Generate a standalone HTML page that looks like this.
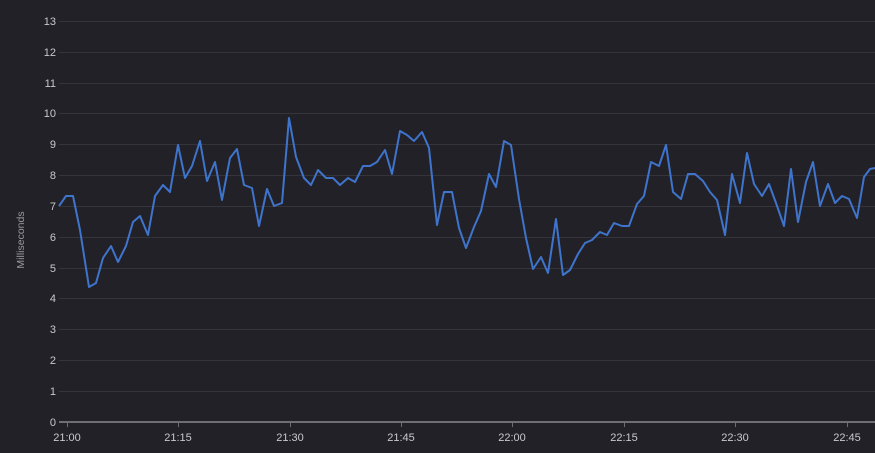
<!DOCTYPE html>
<html><head><meta charset="utf-8"><style>
html,body{margin:0;padding:0;background:#222127;width:875px;height:453px;overflow:hidden}
svg{display:block}
text{font-family:"Liberation Sans",sans-serif;fill:#c9c9cc;font-size:11px}
</style></head><body>
<svg width="875" height="453" viewBox="0 0 875 453">
<rect width="875" height="453" fill="#222127"/>
<g stroke="#34343a" stroke-width="1">
<line x1="59" x2="875" y1="21.5" y2="21.5"/><line x1="59" x2="875" y1="52.5" y2="52.5"/><line x1="59" x2="875" y1="83.5" y2="83.5"/><line x1="59" x2="875" y1="113.5" y2="113.5"/><line x1="59" x2="875" y1="144.5" y2="144.5"/><line x1="59" x2="875" y1="175.5" y2="175.5"/><line x1="59" x2="875" y1="206.5" y2="206.5"/><line x1="59" x2="875" y1="237.5" y2="237.5"/><line x1="59" x2="875" y1="268.5" y2="268.5"/><line x1="59" x2="875" y1="298.5" y2="298.5"/><line x1="59" x2="875" y1="329.5" y2="329.5"/><line x1="59" x2="875" y1="360.5" y2="360.5"/><line x1="59" x2="875" y1="391.5" y2="391.5"/>
</g>
<line x1="59" x2="875" y1="422" y2="422" stroke="#6e6e73" stroke-width="2"/>
<g stroke="#6e6e73" stroke-width="1">
<line x1="67.5" x2="67.5" y1="422" y2="427"/><line x1="178.5" x2="178.5" y1="422" y2="427"/><line x1="290.5" x2="290.5" y1="422" y2="427"/><line x1="401.5" x2="401.5" y1="422" y2="427"/><line x1="512.5" x2="512.5" y1="422" y2="427"/><line x1="624.5" x2="624.5" y1="422" y2="427"/><line x1="735.5" x2="735.5" y1="422" y2="427"/><line x1="847.5" x2="847.5" y1="422" y2="427"/>
</g>
<g text-anchor="end">
<text x="56" y="25">13</text><text x="56" y="56">12</text><text x="56" y="87">11</text><text x="56" y="117">10</text><text x="56" y="148">9</text><text x="56" y="179">8</text><text x="56" y="210">7</text><text x="56" y="241">6</text><text x="56" y="272">5</text><text x="56" y="302">4</text><text x="56" y="333">3</text><text x="56" y="364">2</text><text x="56" y="395">1</text><text x="56" y="426">0</text>
</g>
<g text-anchor="middle">
<text x="67" y="441">21:00</text><text x="178" y="441">21:15</text><text x="290" y="441">21:30</text><text x="401" y="441">21:45</text><text x="512" y="441">22:00</text><text x="624" y="441">22:15</text><text x="735" y="441">22:30</text><text x="847" y="441">22:45</text>
</g>
<text x="0" y="0" transform="translate(24,240) rotate(-90)" text-anchor="middle" style="font-size:10.5px;fill:#9a9aa0">Milliseconds</text>
<polyline fill="none" stroke="#3f74cc" stroke-width="2" stroke-linejoin="round" points="59,206 66,196 73,196 80,230 89,287 96,283 103,258 111,246 118,262 126,246 133,222 140,216 148,235 155,196 163,185 170,192 178,145 185,178 192,166 200,141 207,181 215,162 222,200 230,158 237,149 244,185 252,188 259,226 267,189 274,206 282,203 289,118 296,157 304,178 311,185 318,170 326,178 333,178 340,185 348,178 355,182 363,166 370,166 377,162 385,150 392,174 400,131 407,135 414,141 422,132 429,148 437,225 444,192 452,192 459,228 466,248 474,227 481,211 489,174 496,187 504,141 511,145 519,199 526,238 533,269 541,257 548,273 556,219 563,275 570,270 578,254 585,243 592,240 600,232 607,235 614,223 622,226 629,226 637,204 644,196 651,162 659,166 666,145 673,192 681,199 688,174 695,174 703,181 710,192 717,200 725,235 732,174 740,203 747,153 754,184 762,196 769,184 776,203 784,226 791,169 798,222 806,182 813,162 820,206 828,184 835,203 842,196 849,199 857,218 864,177 870,169 875,168"/>
</svg>
</body></html>
